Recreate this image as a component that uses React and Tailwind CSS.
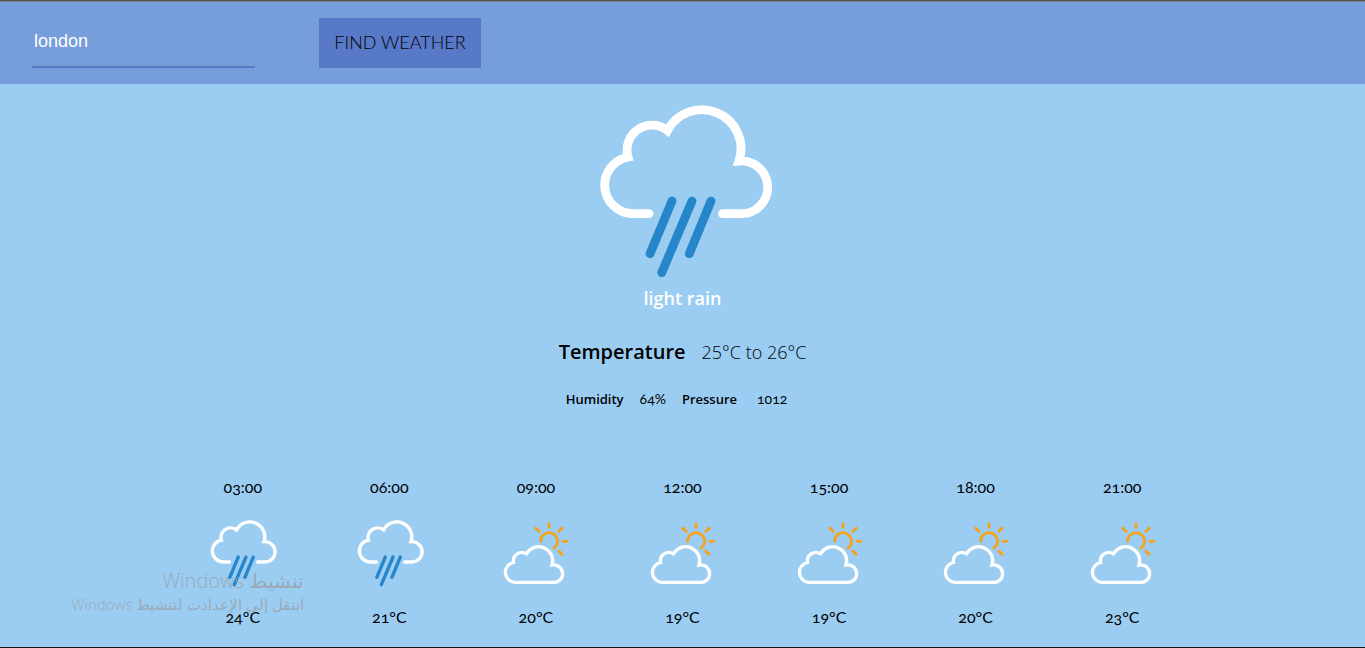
const hours = [
  { time: "03:00", icon: "rain", temp: "24°C" },
  { time: "06:00", icon: "rain", temp: "21°C" },
  { time: "09:00", icon: "sun", temp: "20°C" },
  { time: "12:00", icon: "sun", temp: "19°C" },
  { time: "15:00", icon: "sun", temp: "19°C" },
  { time: "18:00", icon: "sun", temp: "20°C" },
  { time: "21:00", icon: "sun", temp: "23°C" },
];

function RainIcon({ className }) {
  return (
    <svg viewBox="-17 -21 200 200" className={className} fill="none" strokeWidth="8.8" strokeLinecap="round" aria-hidden="true">
      <path
        stroke="#fff"
        d="M49 108.7H33A28.6 28.6 0 0 1 28 52A25 25 0 0 1 67.5 25.5A39 39 0 0 1 139 56A26.4 26.4 0 1 1 141 108.7H122.5"
      />
      <path stroke="#2686ca" d="M72 96L50 148.7M92 96L61.7 167.7M111 96L89.3 148.7" />
    </svg>
  );
}

function SunCloudIcon({ className }) {
  return (
    <svg viewBox="-6 -8 77 77" className={className} fill="none" strokeWidth="3.3" aria-hidden="true">
      <path
        stroke="#fff"
        d="M11.7 62.3A10 10 0 0 1 10.5 42.5A8.6 8.6 0 0 1 23.5 33.8A14 14 0 0 1 49 45A8.8 8.8 0 1 1 49.5 62.3Z"
      />
      <g stroke="#f5a31c" strokeWidth="2.8" strokeLinecap="round">
        <path d="M37.7 21.3A8.4 8.4 0 1 1 51 28" />
        <path d="M46 3.8V7.6M59.3 8L55.8 11.5M60 21.3H64M55.8 31.1L59.3 34.6M32.7 8L36.2 11.5" />
      </g>
    </svg>
  );
}

export default function App() {
  return (
    <div className="relative flex min-h-screen flex-col overflow-hidden border-t border-b border-t-[#505355] border-b-[#14161c] bg-[#9bcdf3] font-['Lato',sans-serif] text-black">
      <header className="border-t border-[#827d80] bg-[#769edb] px-8 py-4">
        <form className="flex items-start gap-16" onSubmit={(e) => e.preventDefault()}>
          <input
            type="text"
            aria-label="City"
            defaultValue="london"
            className="h-[50px] w-[223px] border-b-2 border-[#5878c8] bg-transparent px-0.5 pb-0.5 font-['Liberation_Sans',sans-serif] text-lg text-white outline-none"
          />
          <button type="submit" className="h-[50px] w-[162px] bg-[#5878c8] pb-0.5 text-lg font-light whitespace-nowrap">
            FIND WEATHER
          </button>
        </form>
      </header>

      <main className="flex flex-col items-center">
        <RainIcon className="size-[200px]" />
        <h1 className="font-['Open_Sans',sans-serif] text-lg leading-7 font-semibold text-white">light rain</h1>

        <dl className="mt-6 flex items-baseline gap-4 font-['Open_Sans',sans-serif]">
          <dt className="text-xl leading-8 font-semibold">Temperature</dt>
          <dd className="text-lg leading-8 font-light">25°C to 26°C</dd>
        </dl>

        <dl className="mt-[19px] flex items-baseline gap-4 pr-3 text-sm leading-6">
          <dt className="font-['Open_Sans',sans-serif] text-[13px] leading-6 font-semibold">Humidity</dt>
          <dd className="oldstyle-nums">64%</dd>
          <dt className="font-['Open_Sans',sans-serif] text-[13px] leading-6 font-semibold">Pressure</dt>
          <dd className="pl-1 oldstyle-nums">1012</dd>
        </dl>

        <ul className="mt-16 grid w-full max-w-[1026px] grid-cols-7">
          {hours.map((h) => (
            <li key={h.time} className="flex flex-col items-center text-base leading-6 oldstyle-nums">
              <span>{h.time}</span>
              {h.icon === "rain" ? (
                <RainIcon className="mt-[13px] mb-4 size-[77px]" />
              ) : (
                <SunCloudIcon className="mt-[13px] mb-4 size-[77px]" />
              )}
              <span>{h.temp}</span>
            </li>
          ))}
        </ul>
      </main>

      <div
        dir="rtl"
        lang="ar"
        className="pointer-events-none absolute bottom-8 left-0 w-[304px] font-['Open_Sans','DejaVu_Sans',sans-serif] font-light whitespace-nowrap text-[#9a9fa6]/80"
      >
        <p className="text-xl leading-6">تنشيط Windows</p>
        <p className="text-[15px] leading-[22px]">انتقل إلى الإعدادت لتنشيط Windows.</p>
      </div>
    </div>
  );
}
